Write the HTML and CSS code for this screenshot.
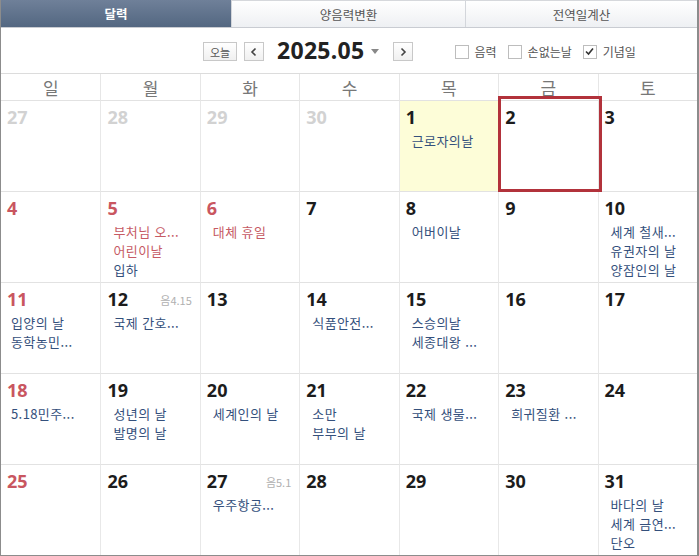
FILE: index.html
```html
<!DOCTYPE html>
<html lang="ko">
<head>
<meta charset="utf-8">
<title>달력</title>
<link rel="stylesheet" href="styles.css">
</head>
<body>
<div class="cal">
  <div class="tabs">
    <div class="tab on">달력</div>
    <div class="tab">양음력변환</div>
    <div class="tab">전역일계산</div>
  </div>
  <div class="toolbar">
    <span class="btn btn-today">오늘</span>
    <span class="btn arrow"><svg width="8" height="10" viewBox="0 0 8 10"><path d="M5.5 1.5 L2 5 L5.5 8.5" fill="none" stroke="#444" stroke-width="1.6"/></svg></span>
    <span class="title">2025.05</span>
    <span class="caret"></span>
    <span class="btn arrow next"><svg width="8" height="10" viewBox="0 0 8 10"><path d="M2.5 1.5 L6 5 L2.5 8.5" fill="none" stroke="#444" stroke-width="1.6"/></svg></span>
    <label class="chk first"><span class="box"></span>음력</label>
    <label class="chk"><span class="box"></span>손없는날</label>
    <label class="chk"><span class="box"><svg width="9" height="9" viewBox="0 0 9 9"><path d="M1 4.5 L3.5 7 L8 1.5" fill="none" stroke="#333" stroke-width="1.6"/></svg></span>기념일</label>
  </div>
  <div class="week">
    <div>일</div><div>월</div><div>화</div><div>수</div><div>목</div><div>금</div><div>토</div>
  </div>
  <div class="days">
    <div class="cell other"><div class="num">27</div></div>
    <div class="cell other"><div class="num">28</div></div>
    <div class="cell other"><div class="num">29</div></div>
    <div class="cell other"><div class="num">30</div></div>
    <div class="cell today"><div class="num">1</div><div class="ev">근로자의날</div></div>
    <div class="cell sel"><div class="num">2</div></div>
    <div class="cell"><div class="num">3</div></div>

    <div class="cell sun"><div class="num">4</div></div>
    <div class="cell hol"><div class="num">5</div><div class="ev red">부처님 오...</div><div class="ev red">어린이날</div><div class="ev">입하</div></div>
    <div class="cell hol"><div class="num">6</div><div class="ev red">대체 휴일</div></div>
    <div class="cell"><div class="num">7</div></div>
    <div class="cell"><div class="num">8</div><div class="ev">어버이날</div></div>
    <div class="cell"><div class="num">9</div></div>
    <div class="cell"><div class="num">10</div><div class="ev">세계 철새...</div><div class="ev">유권자의 날</div><div class="ev">양잠인의 날</div></div>

    <div class="cell sun"><div class="num">11</div><div class="ev tight">입양의 날</div><div class="ev tight">동학농민...</div></div>
    <div class="cell"><div class="num">12<span class="lunar">음4.15</span></div><div class="ev">국제 간호...</div></div>
    <div class="cell"><div class="num">13</div></div>
    <div class="cell"><div class="num">14</div><div class="ev">식품안전...</div></div>
    <div class="cell"><div class="num">15</div><div class="ev">스승의날</div><div class="ev">세종대왕 ...</div></div>
    <div class="cell"><div class="num">16</div></div>
    <div class="cell"><div class="num">17</div></div>

    <div class="cell sun"><div class="num">18</div><div class="ev tight">5.18민주...</div></div>
    <div class="cell"><div class="num">19</div><div class="ev">성년의 날</div><div class="ev">발명의 날</div></div>
    <div class="cell"><div class="num">20</div><div class="ev">세계인의 날</div></div>
    <div class="cell"><div class="num">21</div><div class="ev">소만</div><div class="ev">부부의 날</div></div>
    <div class="cell"><div class="num">22</div><div class="ev">국제 생물...</div></div>
    <div class="cell"><div class="num">23</div><div class="ev">희귀질환 ...</div></div>
    <div class="cell"><div class="num">24</div></div>

    <div class="cell sun"><div class="num">25</div></div>
    <div class="cell"><div class="num">26</div></div>
    <div class="cell"><div class="num">27<span class="lunar">음5.1</span></div><div class="ev">우주항공...</div></div>
    <div class="cell"><div class="num">28</div></div>
    <div class="cell"><div class="num">29</div></div>
    <div class="cell"><div class="num">30</div></div>
    <div class="cell"><div class="num">31</div><div class="ev">바다의 날</div><div class="ev">세계 금연...</div><div class="ev">단오</div></div>
  </div>
</div>
</body>
</html>
```

FILE: styles.css
```css
* { box-sizing: border-box; }
html, body { margin: 0; padding: 0; background: #fff; }
body { font-family: "Noto Sans", "Noto Sans CJK KR", sans-serif; }

.cal {
  width: 699px;
  height: 556px;
  border-left: 1px solid #8c8c8c;
  border-right: 2px solid #8c8c8c;
  border-bottom: 1px solid #8c8c8c;
  display: flex;
  flex-direction: column;
  overflow: hidden;
}

.tabs {
  display: grid;
  grid-template-columns: 230px 234px 1fr;
  height: 28px;
  border-bottom: 1px solid #c9ccd2;
  flex: none;
}
.tab {
  display: flex;
  align-items: center;
  justify-content: center;
  font-family: "Noto Sans CJK KR", sans-serif;
  font-size: 12.5px;
  color: #555;
  background: linear-gradient(#ffffff, #eef0f3);
  border-top: 1px solid #d6d8dc;
  border-left: 1px solid #d3d6db;
}
.tab.on {
  background: linear-gradient(#6f8099, #536781);
  color: #fff;
  font-weight: 700;
  border: 0;
}

.toolbar {
  height: 45px;
  flex: none;
  display: flex;
  align-items: center;
  padding-left: 202px;
  padding-top: 2px;
}
.btn {
  height: 19px;
  border: 1px solid #c8c8c8;
  background: linear-gradient(#ffffff, #f0f0f0);
  display: inline-flex;
  align-items: center;
  justify-content: center;
  font-family: "Noto Sans CJK KR", sans-serif;
  font-size: 11px;
  color: #555;
}
.btn-today { width: 34px; margin-right: 7px; }
.btn.arrow { width: 20px; }
.title {
  font-family: "Noto Sans", sans-serif;
  font-weight: 700;
  font-size: 23px;
  color: #222;
  margin-left: 13px;
  letter-spacing: 0.3px;
  line-height: 1;
  padding-bottom: 2px;
}
.caret {
  width: 0; height: 0;
  border-left: 4px solid transparent;
  border-right: 4px solid transparent;
  border-top: 5px solid #888;
  margin: 0 14px 0 6px;
}
.chk {
  display: inline-flex;
  align-items: center;
  font-family: "Noto Sans CJK KR", sans-serif;
  font-size: 12px;
  color: #555;
  margin-left: 11px;
}
.chk.first { margin-left: 42px; }
.box {
  width: 14px; height: 14px;
  border: 1px solid #bdbdbd;
  background: #fff;
  margin-right: 6px;
  display: inline-flex;
  align-items: center;
  justify-content: center;
}

.week {
  height: 27px;
  flex: none;
  display: grid;
  grid-template-columns: repeat(7, 1fr);
  border-top: 1px solid #dcdcdc;
}
.week div {
  display: flex;
  align-items: center;
  justify-content: center;
  font-family: "Noto Sans CJK KR", sans-serif;
  font-size: 17px;
  color: #777;
  border-left: 1px solid #e6e6e6;
}
.week div:first-child { border-left: 0; }

.days {
  flex: 1;
  display: grid;
  grid-template-columns: repeat(7, 1fr);
  grid-template-rows: repeat(5, 91px);
}
.cell {
  position: relative;
  border-top: 1px solid #e2e2e2;
  border-left: 1px solid #e8e8e8;
  padding: 5px 6px 0 6px;
  min-width: 0;
}
.cell:nth-child(7n+1) { border-left: 0; }
.num {
  display: flex;
  justify-content: space-between;
  align-items: center;
  padding-right: 2px;
  font-family: "Noto Sans", sans-serif;
  font-weight: 700;
  font-size: 18px;
  line-height: 22px;
  color: #1c1c1c;
}
.lunar {
  font-family: "Noto Sans CJK KR", sans-serif;
  font-weight: 400;
  font-size: 11px;
  line-height: 16px;
  color: #b0b0b0;
  padding-top: 2px;
}
.other .num { color: #d2d2d2; }
.sun .num, .hol .num { color: #c95660; }
.ev {
  font-family: "Noto Sans CJK KR", sans-serif;
  font-size: 13px;
  line-height: 19px;
  letter-spacing: 0.4px;
  color: #34507c;
  padding-left: 6px;
  white-space: nowrap;
}
.num + .ev { margin-top: 3px; }
.ev.tight { padding-left: 4px; }
.ev.red { color: #c65a64; }
.today { background: #fdfdd8; }
.sel::after {
  content: "";
  position: absolute;
  top: -5px;
  left: -1px;
  right: -4px;
  bottom: -1px;
  border: 3px solid #b2323b;
  z-index: 2;
}
```
